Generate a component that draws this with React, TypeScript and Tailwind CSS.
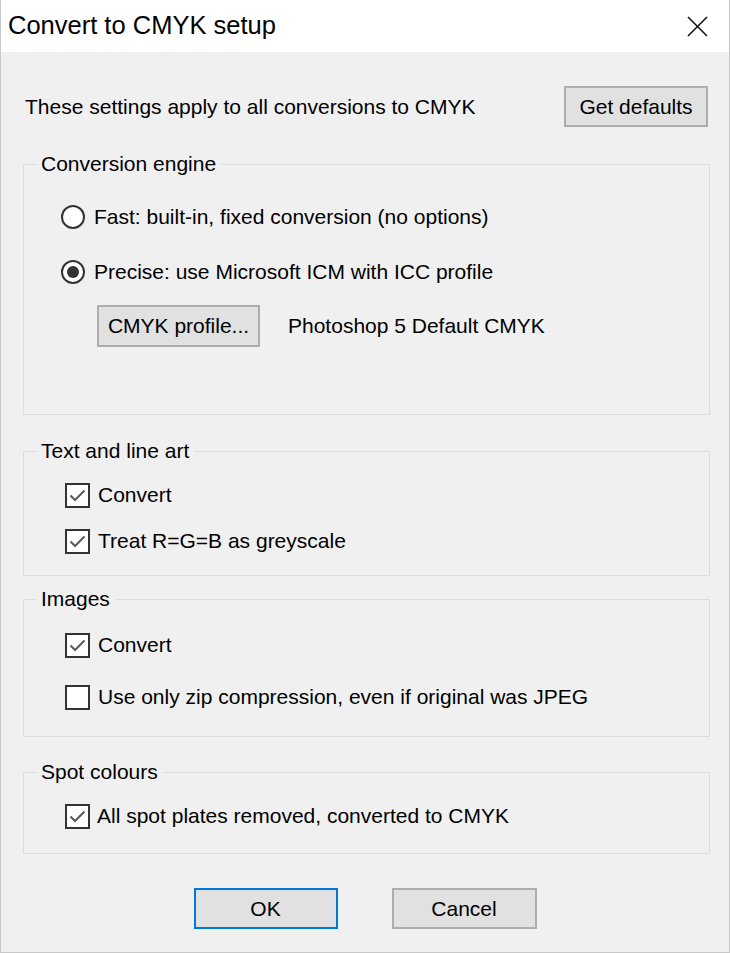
import React from "react";

function Radio({ checked }: { checked?: boolean }) {
  return (
    <span className="w-[24px] h-[24px] rounded-full border-2 border-[#333333] bg-white flex items-center justify-center shrink-0">
      {checked && <span className="w-[12px] h-[12px] rounded-full bg-[#333333]" />}
    </span>
  );
}

function Check({ checked }: { checked?: boolean }) {
  return (
    <span className="w-[25px] h-[25px] border-2 border-[#333333] bg-white flex items-center justify-center shrink-0">
      {checked && (
        <svg width="21" height="21" viewBox="0 0 21 21">
          <polyline points="3.5,10.5 8,15 17.5,5.5" fill="none" stroke="#5a5a5a" strokeWidth="2" />
        </svg>
      )}
    </span>
  );
}

function Group({ title, className, children }: { title: string; className: string; children: React.ReactNode }) {
  return (
    <fieldset className={"border border-[#dcdcdc] p-0 m-0 min-w-0 shrink-0 " + className}>
      <legend className="ml-[12px] px-[5px] leading-[24px] h-[24px]">{title}</legend>
      {children}
    </fieldset>
  );
}

function Btn({ label, w, primary, className = "" }: { label: string; w: string; primary?: boolean; className?: string }) {
  return (
    <div
      className={
        "flex items-center justify-center bg-[#e1e1e1] border-2 shrink-0 " +
        (primary ? "border-[#0078d7] " : "border-[#adadad] ") +
        w +
        " " +
        className
      }
    >
      {label}
    </div>
  );
}

export default function App() {
  return (
    <div
      className="w-[730px] h-[953px] bg-[#f0f0f0] text-black text-[21px] border-l border-r border-b border-[#c8c8c8] flex flex-col"
      style={{ fontFamily: '"Liberation Sans", Arial, sans-serif' }}
    >
      <div className="h-[52px] bg-white flex items-center justify-between pl-[7px] pr-[21px] shrink-0">
        <span className="text-[25.5px] leading-none">Convert to CMYK setup</span>
        <svg width="21" height="21" viewBox="0 0 21 21">
          <line x1="1" y1="1" x2="20" y2="20" stroke="#111" strokeWidth="1.6" />
          <line x1="20" y1="1" x2="1" y2="20" stroke="#111" strokeWidth="1.6" />
        </svg>
      </div>

      <div className="pl-[22px] pr-[19px] flex flex-col shrink-0">
        <div className="mt-[34px] flex items-center justify-between pl-[2px] pr-[2px] shrink-0">
          <span>These settings apply to all conversions to CMYK</span>
          <Btn label="Get defaults" w="w-[144px]" className="h-[41px]" />
        </div>

        <Group title="Conversion engine" className="mt-[25px]">
          <div className="pl-[37px] pt-[27px] pb-[67px] flex flex-col">
            <div className="h-[28px] flex items-center gap-[9px]">
              <Radio />
              <span>Fast: built-in, fixed conversion (no options)</span>
            </div>
            <div className="mt-[27px] h-[28px] flex items-center gap-[9px]">
              <Radio checked />
              <span>Precise: use Microsoft ICM with ICC profile</span>
            </div>
            <div className="mt-[19px] ml-[36px] flex items-center gap-[28px]">
              <Btn label="CMYK profile..." w="w-[163px]" className="h-[42px]" />
              <span>Photoshop 5 Default CMYK</span>
            </div>
          </div>
        </Group>

        <Group title="Text and line art" className="mt-[24px]">
          <div className="pl-[41px] pt-[19px] pb-[21px] flex flex-col">
            <div className="h-[26px] flex items-center gap-[8px]">
              <Check checked />
              <span>Convert</span>
            </div>
            <div className="mt-[20px] h-[26px] flex items-center gap-[8px]">
              <Check checked />
              <span>Treat R=G=B as greyscale</span>
            </div>
          </div>
        </Group>

        <Group title="Images" className="mt-[11px]">
          <div className="pl-[41px] pt-[21px] pb-[26px] flex flex-col">
            <div className="h-[26px] flex items-center gap-[8px]">
              <Check checked />
              <span>Convert</span>
            </div>
            <div className="mt-[26px] h-[26px] flex items-center gap-[8px]">
              <Check />
              <span>Use only zip compression, even if original was JPEG</span>
            </div>
          </div>
        </Group>

        <Group title="Spot colours" className="mt-[23px]">
          <div className="pl-[41px] pt-[19px] pb-[24px] flex flex-col">
            <div className="h-[26px] flex items-center gap-[7px]">
              <Check checked />
              <span>All spot plates removed, converted to CMYK</span>
            </div>
          </div>
        </Group>

        <div className="mt-[34px] flex justify-center gap-[54px] pr-[3px] shrink-0">
          <Btn label="OK" w="w-[144px]" primary className="h-[41px]" />
          <Btn label="Cancel" w="w-[145px]" className="h-[41px]" />
        </div>
      </div>
    </div>
  );
}
